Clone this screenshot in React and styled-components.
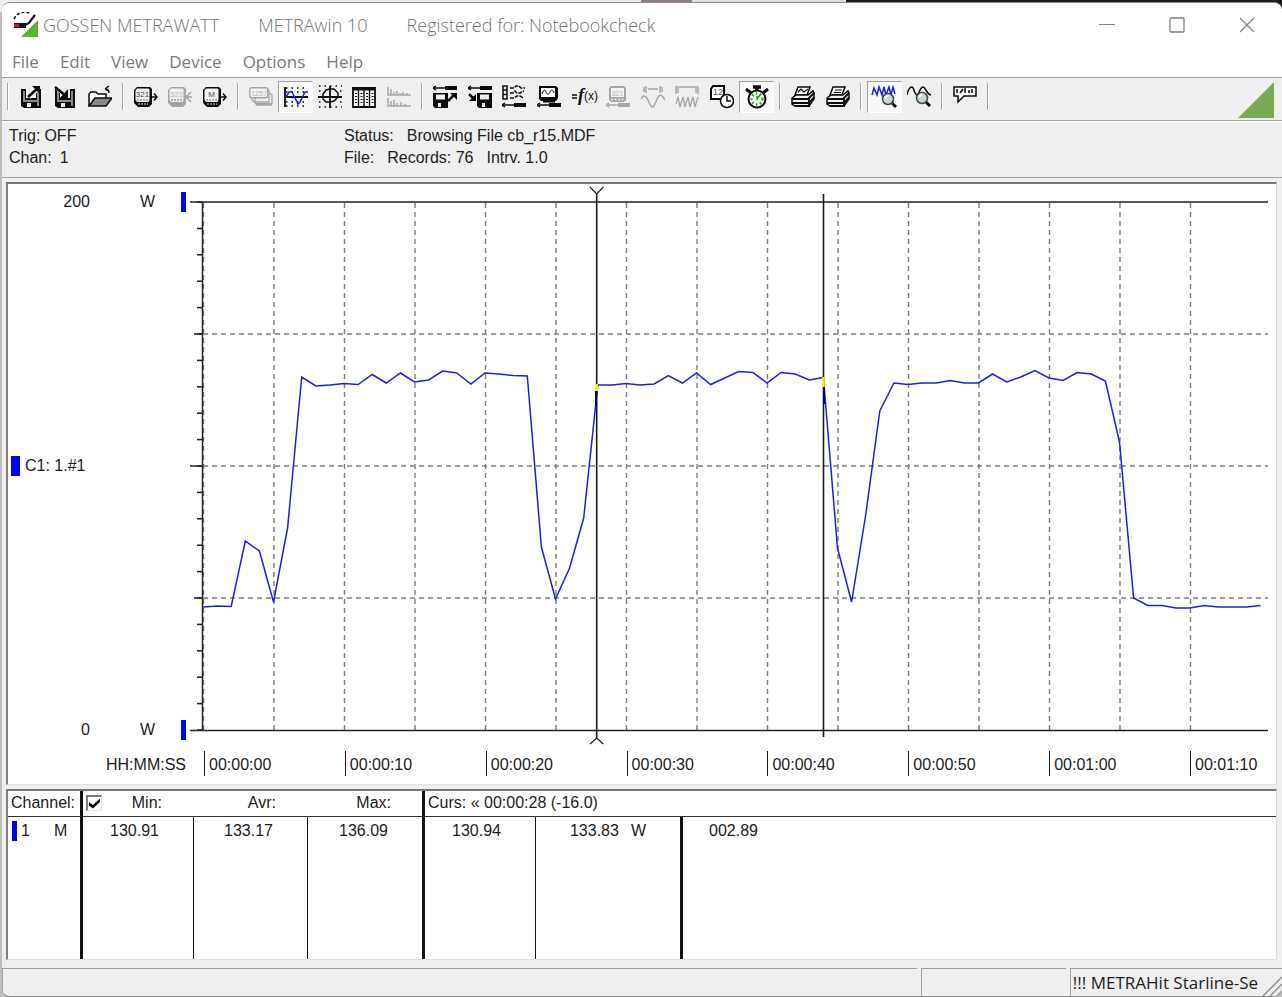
import React from "react";
import styled, { createGlobalStyle, css } from "styled-components";

const GlobalStyle = createGlobalStyle`
  * { box-sizing: border-box; }
  body {
    margin: 0;
    background: #c6c6c6;
    font-family: "Liberation Sans", Arial, sans-serif;
    font-size: 16px;
    line-height: 20px;
    color: #1c1c1c;
  }
`;

const Desktop = styled.div`
  min-height: 100vh;
  display: flex;
  flex-direction: column;
  padding: 2px 0 0 2px;
  background:
    linear-gradient(90deg, #ececec 0 50%, #8f7f78 50% 54%, #dcdcdc 54% 66%, #1d1a1a 66%) top / 100% 12px no-repeat,
    #bdbdbd;
`;

const Window = styled.main`
  flex: 1;
  display: flex;
  flex-direction: column;
  overflow: hidden;
  background: #efefef;
  border-top: 1px solid #8c8c8c;
  border-bottom: 1px solid #8c8c8c;
  border-radius: 8px;
`;

/* ---------- title bar and menu ---------- */

const TitleBar = styled.header`
  display: flex;
  align-items: center;
  height: 44px;
  padding-left: 11px;
  background: #fff;
  color: #747474;
  font-family: "Open Sans", sans-serif;
  font-size: 18px;
  font-weight: 300;
`;

const TitleText = styled.h1`
  display: flex;
  flex: 1;
  gap: 39px;
  margin: 0 0 0 4px;
  font: inherit;
  line-height: 24px;
  white-space: nowrap;
`;

const WindowButton = styled.button`
  display: grid;
  place-items: center;
  width: 70px;
  height: 44px;
  padding: 0;
  border: 0;
  background: none;
  color: #808080;
`;

const MenuBar = styled.nav`
  display: flex;
  align-items: center;
  gap: 21px;
  height: 31px;
  padding-left: 10px;
  background: #fff;
  border-bottom: 1px solid #a2a2a2;
`;

const MenuButton = styled.button`
  padding: 0;
  border: 0;
  background: none;
  color: #7a7a7a;
  font-family: "Open Sans", sans-serif;
  font-size: 17px;
  line-height: 24px;
`;

/* ---------- toolbar ---------- */

const Toolbar = styled.div`
  display: flex;
  align-items: flex-start;
  height: 43px;
  padding: 3px 8px 0 0;
  border-bottom: 1px solid #a2a2a2;
`;

const ToolGroup = styled.div`
  display: flex;
  flex: none;
  width: ${(p) => p.$width}px;
`;

const ToolButton = styled.button`
  display: grid;
  place-items: center;
  flex: 1;
  min-width: 0;
  height: 32px;
  padding: 0;
  border: 1px solid transparent;
  background: none;
  color: ${(p) => (p.disabled ? "#a6a6a6" : "#0b0b0b")};
  ${(p) =>
    p.$pressed &&
    css`
      background: #f8f8f8;
      border-color: #a0a0a0 #fff #fff #a0a0a0;
    `}
`;

const Separator = styled.span`
  flex: none;
  width: 2px;
  height: 27px;
  margin: 2px 5px 0;
  border-left: 1px solid #a4a4a4;
  border-right: 1px solid #fff;
`;

const BrandCorner = styled.svg`
  display: block;
  flex: none;
  margin-left: auto;
`;

/* ---------- recording information ---------- */

const InfoBar = styled.section`
  display: grid;
  grid-template-columns: 335px 1fr;
  padding: 3px 7px 8px;
  line-height: 22px;
  border-top: 1px solid #fff;
  border-bottom: 1px solid #a2a2a2;
`;

const InfoLine = styled.div`
  display: flex;
  gap: ${(p) => p.$gap}px;
  white-space: nowrap;
`;

/* ---------- sunken panels ---------- */

const Panel = styled.section`
  margin: ${(p) => p.$margin};
  background: #fff;
  border: solid;
  border-width: 2px 1px 1px 2px;
  border-color: #777 #e0e0e0 #e0e0e0 #808080;
`;

const ChartGrid = styled.div`
  display: grid;
  grid-template-columns: 182px 1fr;
  padding-right: 8px;
`;

const ScaleColumn = styled.div`
  display: flex;
  flex-direction: column;
  justify-content: space-between;
  padding: 8px 0;
`;

const ScaleRow = styled.div`
  display: grid;
  grid-template-columns: 82px 50px 33px 5px;
  align-items: center;
  height: 20px;
`;

const ScaleValue = styled.span`
  text-align: right;
`;

const ScaleUnit = styled.span`
  grid-column: 3;
`;

const ScaleBar = styled.span`
  width: 5px;
  height: 20px;
  margin-left: 8px;
  background: #0000f5;
`;

const ChannelTag = styled.div`
  display: flex;
  align-items: center;
  gap: 5px;
  padding-left: 3px;
`;

const ChannelSwatch = styled.span`
  width: ${(p) => p.$width}px;
  height: 20px;
  background: #0000f5;
`;

const Plot = styled.svg`
  display: block;
  width: 100%;
  height: 564px;
`;

const TimeUnit = styled.div`
  padding: 7px 4px 0 0;
  text-align: right;
`;

const TimeAxis = styled.div`
  display: grid;
  grid-template-columns: repeat(7, 141fr) 78fr;
  height: 36px;
  padding: 3px 0 0 14px;
`;

const TimeMark = styled.span`
  height: 25px;
  padding: 4px 0 0 4px;
  border-left: 1px solid #1c1c1c;
  white-space: nowrap;
`;

/* ---------- readings ---------- */

const Readings = styled.table`
  width: 100%;
  table-layout: fixed;
  border-collapse: separate;
  border-spacing: 0;
`;

const Head = styled.th`
  height: 26px;
  padding: 0 ${(p) => p.$pad ?? 32}px 1px 3px;
  border: 0 solid #111;
  border-bottom-color: #333;
  border-width: 0 ${(p) => p.$rule ?? 0}px 1px 0;
  font-weight: 400;
  text-align: ${(p) => p.$align ?? "right"};
  white-space: nowrap;
`;

const HeadWithCheck = styled.span`
  display: flex;
  align-items: center;
  justify-content: space-between;
`;

const Check = styled.input`
  appearance: none;
  display: grid;
  place-items: center;
  width: 16px;
  height: 16px;
  margin: 0;
  border: solid;
  border-width: 2px 1px 1px 2px;
  border-color: #7c7c7c #e4e4e4 #e4e4e4 #7c7c7c;
  background: #fff;
  &:checked::before {
    content: "";
    width: 11px;
    height: 10px;
    background: #000;
    clip-path: polygon(0 35%, 35% 65%, 100% 0, 100% 35%, 35% 100%, 0 70%);
  }
`;

const Cell = styled.td`
  height: 142px;
  padding: 4px 34px 0 4px;
  border: 0 solid #111;
  border-right-width: ${(p) => p.$rule ?? 0}px;
  text-align: ${(p) => p.$align ?? "right"};
  vertical-align: top;
  white-space: nowrap;
`;

const ChannelCell = styled(Cell)`
  padding-right: 0;
`;

const ChannelName = styled.span`
  display: grid;
  grid-template-columns: 9px 33px auto;
`;

const DeltaValue = styled.span`
  padding-left: 22px;
`;

const UnitAfter = styled.span`
  padding-left: 12px;
`;

/* ---------- status bar ---------- */

const StatusBar = styled.footer`
  display: grid;
  grid-template-columns: 914fr 145fr 212fr;
  gap: 4px;
  min-height: 28px;
  margin-top: auto;
`;

const StatusField = styled.div`
  display: flex;
  align-items: center;
  justify-content: space-between;
  min-width: 0;
  padding-left: 2px;
  border: 0 solid #a2a2a2;
  border-width: 1px 0 0 1px;
  font-family: "Open Sans", sans-serif;
  font-size: 17px;
  line-height: 24px;
  white-space: nowrap;
`;

const Grip = styled.svg`
  flex: none;
  align-self: flex-end;
`;

/* ---------- icons ---------- */

const Icon = ({ children }) => (
  <svg width="24" height="24" viewBox="0 0 24 24" fill="none" stroke="currentColor" strokeWidth="1.5" aria-hidden="true">
    {children}
  </svg>
);

const IconText = ({ x, y, size, children }) => (
  <text
    x={x}
    y={y}
    fontSize={size}
    textAnchor="middle"
    fill="currentColor"
    stroke="none"
    opacity="0.75"
    fontFamily="Liberation Sans, sans-serif"
  >
    {children}
  </text>
);

const Floppy = () => (
  <>
    <path d="M2 4h20v19H5l-3-2z" fill="currentColor" stroke="none" />
    <path d="M4 6h2v9H4zM18 6h2v15h-2zM4 15h16v2H4z" fill="#8b8b8b" stroke="none" />
    <path d="M7 2h10v11H7z" fill="#efefef" stroke="none" />
    <path d="M8 18h4v4H8z" fill="#efefef" stroke="none" />
  </>
);

const SmallFloppy = ({ x }) => (
  <g transform={`translate(${x} 0)`} stroke="none">
    <path d="M0 8h15v15H2l-2-2z" fill="currentColor" />
    <path d="M3 9.500h9v5H3zM5 18h3v4H5z" fill="#efefef" />
  </g>
);

const Probe = ({ y }) => (
  <g transform={`translate(0 ${y})`}>
    <path d="M0 0h13" />
    <path d="M3-2L0 0l3 2" />
    <path d="M12-2h12v4H12z" fill="currentColor" stroke="none" />
  </g>
);

const Meter = ({ label }) => (
  <>
    <path d="M3 2h13l2 2v15l-3 3H4l-4-4V5z" fill="currentColor" stroke="none" />
    <path d="M3 3.500h11.500l1 1V15l-1 2H3l-1.500-2V5.500z" fill="#f0f0f0" stroke="none" />
    <IconText x={8.5} y={12} size={8}>
      {label}
    </IconText>
    <path d="M3 15h11M4 19h10" stroke="#9a9a9a" strokeDasharray="2 1" />
  </>
);

const ArrowRight = () => <path d="M18 12h5M20 8.500l3 3.500-3 3.500" />;

const Printer = ({ children }) => (
  <>
    <path d="M4 10L7 2h12l-3 8z" fill="#fff" />
    {children}
    <path d="M1 13l4-3h12l5-4 1 2v6l-5 7H4l-3-2z" fill="#f2f2f2" />
    <path d="M1 14h16l6-6M1 18h17l5-6M4 21h14v-8" strokeWidth="1.800" />
  </>
);

const Lens = ({ cx, cy }) => (
  <>
    <path d={`M${cx + 3} ${cy + 3}l5 5`} strokeWidth="3" stroke="#0b0b0b" />
    <circle cx={cx} cy={cy} r="5.500" fill="#c9d6d6" stroke="#444" />
    <path d={`M${cx - 3} ${cy - 1}l3-3`} stroke="#fff" strokeWidth="2" />
  </>
);

const icons = {
  export: (
    <Icon>
      <Floppy />
      <path d="M10 12l9-9" stroke="#efefef" strokeWidth="5" />
      <path d="M9 12l10-9" strokeWidth="2.500" />
      <path d="M13 1h8v8z" fill="currentColor" stroke="none" />
    </Icon>
  ),
  import: (
    <Icon>
      <Floppy />
      <path d="M3 1l10 10" stroke="#efefef" strokeWidth="5" />
      <path d="M2 2l11 9" strokeWidth="2.500" />
      <path d="M15 4v9H7z" fill="currentColor" stroke="none" />
    </Icon>
  ),
  open: (
    <Icon>
      <path d="M1 21V9l2-2h5l2 2h8v4" fill="#fff" />
      <path d="M1 21l6-8h17l-6 8z" fill="#888" />
      <path d="M17 4c3 0 4 2 4 4M17 4l4-3M17 4l4 2" />
    </Icon>
  ),
  meterOut: (
    <Icon>
      <Meter label="321" />
      <ArrowRight />
    </Icon>
  ),
  meterMulti: (
    <Icon>
      <Meter label="321" />
      <path d="M17 12h3M18 12l5-5M18 12h6M18 12l5 5" />
    </Icon>
  ),
  memoryOut: (
    <Icon>
      <Meter label="M" />
      <ArrowRight />
    </Icon>
  ),
  display: (
    <Icon>
      <path d="M6 12v6l2 2h14l1-2v-8l-2-2M3 12v3l2 2h15V6l-1-2" strokeWidth="1.300" />
      <rect x="0.700" y="2.700" width="18" height="10" rx="2" fill="#f2f2f2" />
      <IconText x={10} y={10.5} size={7}>
        1257
      </IconText>
      <path d="M7 19h15" strokeWidth="2" />
    </Icon>
  ),
  curve: (
    <Icon>
      <path d="M2 3h22M2 7h22M2 17h22M2 21h22" strokeDasharray="1.500 4" />
      <path d="M1 2v20M0 12h24" strokeWidth="1.800" />
      <path d="M2 12l3-5h3l5 10 1 2 2-2 5-10h3" stroke="#2020e8" />
    </Icon>
  ),
  xy: (
    <Icon>
      <path d="M1 1h23M1 22h23M1 6h3M22 6h3M1 17h3M22 17h3" strokeDasharray="1.500 4" />
      <path d="M0 12h24M12 1v22" strokeWidth="1.800" />
      <path d="M12 4h4l4 4v4l-4 4-4 1H8l-3-3V9l3-4z" />
    </Icon>
  ),
  table: (
    <Icon>
      <path d="M1 3h22v19H1z" fill="#fff" strokeWidth="1.800" />
      <path d="M1 4h22" strokeWidth="3" />
      <path d="M6.500 3v19M12 3v19M17.500 3v19" strokeWidth="1.400" />
      <path d="M3 8.500h21M3 11.500h21M3 14.500h21M3 17.500h21" strokeDasharray="2 3.500" strokeWidth="1.200" />
    </Icon>
  ),
  bars: (
    <Icon>
      <path d="M1 2v8h23M1 13v8h23" />
      <path d="M4 4v6M7 7v3M10 6v4M13 8v2M16 7v3M20 8v2M4 16v5M7 15v6M10 18v3M14 17v4M18 19v2" />
    </Icon>
  ),
  probeSave: (
    <Icon>
      <Probe y={3} />
      <SmallFloppy x={0} />
      <path d="M15 16l6-6" strokeWidth="2.500" />
      <path d="M17 8h7v7z" fill="currentColor" stroke="none" />
    </Icon>
  ),
  probeLoad: (
    <Icon>
      <Probe y={3} />
      <SmallFloppy x={9} />
      <path d="M1 9l4 4" strokeWidth="2.500" />
      <path d="M8 9v7H1z" fill="currentColor" stroke="none" />
    </Icon>
  ),
  probeList: (
    <Icon>
      <path d="M1 1h4v13H1zM1 5h4M1 9.500h4" />
      <path d="M8 3h4l2-2h3l2 2h4M8 8h3l2-2 2 2h3l4-2M8 13h4l3-2h3l3 2" strokeDasharray="4 1" />
      <Probe y={20} />
    </Icon>
  ),
  probeScreen: (
    <Icon>
      <path d="M2 1h17l2 2v10l-2 3H4l-2-2z" fill="currentColor" stroke="none" />
      <path d="M4 3h14v9H4z" fill="#fff" stroke="none" />
      <path d="M5 9c2-5 3-5 4-2s3 3 4 0 3-2 4 1" strokeWidth="1" />
      <path d="M6 16h12" strokeWidth="3" />
      <Probe y={20} />
    </Icon>
  ),
  formula: (
    <svg width="28" height="24" viewBox="0 0 28 24" aria-hidden="true">
      <path d="M2 10h5M2 13h5" stroke="currentColor" strokeWidth="1.500" />
      <text x="8" y="16" fontSize="18" fontStyle="italic" fontWeight="700" fontFamily="Liberation Serif, serif" fill="currentColor">
        f
      </text>
      <text x="14" y="15" fontSize="12" fontFamily="Liberation Sans, sans-serif" fill="currentColor">
        (x)
      </text>
    </svg>
  ),
  probeMeter: (
    <Icon>
      <path d="M5 1h13l2 2v12l-2 2H5l-2-2V3z" fill="currentColor" stroke="none" />
      <path d="M5 3h13v9H5z" fill="#f2f2f2" stroke="none" />
      <IconText x={11.5} y={10.5} size={7}>
        321
      </IconText>
      <path d="M5 14.500h13" stroke="#efefef" strokeDasharray="2 1.500" />
      <Probe y={20} />
    </Icon>
  ),
  span: (
    <Icon>
      <path d="M5 1v7M19 1v7M7 4h10M3 2v5M21 2v5" />
      <path d="M0 14c2-4 5-4 7 1s4 9 6 6l4-9c2-3 4-2 7 3" />
    </Icon>
  ),
  compress: (
    <Icon>
      <path d="M1 9V2h22v7M3 3v5M21 3v5" />
      <path d="M1 19l2-7 2 10 3-10 2 10 3-10 2 10 3-10 2 10 3-10" strokeWidth="1.300" />
    </Icon>
  ),
  meterClock: (
    <Icon>
      <path d="M3 1h11v9l-3 4H1V4z" fill="#fff" strokeWidth="2" />
      <IconText x={8} y={10} size={9}>
        12
      </IconText>
      <circle cx="17" cy="16" r="6.500" fill="#fff" />
      <path d="M17 11v5h4" />
    </Icon>
  ),
  stopwatch: (
    <Icon>
      <circle cx="12" cy="14" r="8.500" fill="#fff" strokeWidth="2" />
      <circle cx="12" cy="14" r="5.500" stroke="#18a018" strokeWidth="2.500" strokeDasharray="1.500 2.500" />
      <path d="M12 14l3-4M12 15v-4" stroke="#18a018" />
      <path d="M8 2h8M12 1v5" strokeWidth="3.500" />
      <path d="M1 4l5 4M23 4l-5 4" strokeWidth="3" />
    </Icon>
  ),
  printCurve: (
    <Icon>
      <Printer>
        <path d="M7 7l3-3 3 3 4-3" strokeWidth="1.200" />
      </Printer>
    </Icon>
  ),
  printText: (
    <Icon>
      <Printer>
        <path d="M9 5h7M8 7.500h7" strokeWidth="1.200" />
      </Printer>
    </Icon>
  ),
  zoomWave: (
    <svg width="26" height="24" viewBox="0 0 26 24" fill="none" stroke="currentColor" strokeWidth="1.500" aria-hidden="true">
      <path d="M1 10l2-7 3 7 2-8 3 8 2-8 2 8 3-8 2 8 2-8 2 7" stroke="#2020e8" />
      <Lens cx={17} cy={14} />
    </svg>
  ),
  zoomCurve: (
    <Icon>
      <path d="M0 10c1-5 3-8 5-8s2 7 5 8c2 0 3-8 6-8s3 7 8 8" />
      <Lens cx={15} cy={13} />
    </Icon>
  ),
  note: (
    <Icon>
      <path d="M1 2h22v9H11l-6 6V11H1z" fill="#fff" />
      <path d="M4 4v4M7 8l3-4M13 4h-1v4M16 5v3M19 4v4" />
    </Icon>
  ),
};

const toolGroups = [
  { width: 103, tools: [["export", "Save as"], ["import", "Save"], ["open", "Open"]] },
  { width: 103, tools: [["meterOut", "Read device"], ["meterMulti", "Read several", "off"], ["memoryOut", "Read memory"]] },
  {
    width: 172,
    tools: [["display", "Display", "off"], ["curve", "Y-t chart", "on"], ["xy", "X-Y chart"], ["table", "Table"], ["bars", "Histogram", "off"]],
  },
  {
    width: 346,
    tools: [
      ["probeSave", "Save setup"],
      ["probeLoad", "Load setup"],
      ["probeList", "Channel list"],
      ["probeScreen", "Screen setup"],
      ["formula", "Formula"],
      ["probeMeter", "Device setup", "off"],
      ["span", "Expand", "off"],
      ["compress", "Compress", "off"],
      ["meterClock", "Set clock"],
      ["stopwatch", "Timer", "on"],
    ],
  },
  { width: 69, tools: [["printCurve", "Print chart"], ["printText", "Print table"]] },
  { width: 69, tools: [["zoomWave", "Zoom out", "on"], ["zoomCurve", "Zoom in"]] },
  { width: 34, tools: [["note", "Comment"]] },
];

/* ---------- chart ---------- */

// One reading per second, as a height in the plot (202 = 200 W, 730 = 0 W).
const trace = [
  607, 606, 606.5, 541, 551, 602, 528, 377, 386, 385, 383.5, 384.5, 374.5, 383, 373, 382, 380, 371, 373, 384,
  373, 374, 375.5, 376, 547, 599, 568, 518, 385, 385, 383.5, 385, 384, 375.5, 383, 373, 384.5, 378, 371.5, 372.5,
  383, 372.5, 374, 380, 377.5, 548, 602, 515, 411, 383, 384.5, 383, 383, 380.5, 383, 383, 374, 382, 377, 370.5,
  378, 380.5, 372.5, 374, 381, 442, 598, 605.5, 605.5, 608, 608, 605.5, 607, 607, 607, 605.5,
];
const xAt = (second) => 203.5 + second * 14.1;
const fiveSeconds = Array.from({ length: 15 }, (_, i) => xAt(i * 5));
const minorTicks = Array.from({ length: 21 }, (_, i) => 202 + i * 26.4);

const Chart = () => (
  <Plot viewBox="190 184 1078 564" preserveAspectRatio="none" fill="none" role="img" aria-label="Power over time">
    <g stroke="#7d7d7d" strokeWidth="1.400" strokeDasharray="5 4">
      {fiveSeconds.map((x) => (
        <path key={x} d={`M${x} 203V730`} />
      ))}
      {[334, 466, 598].map((y) => (
        <path key={y} d={`M203 ${y}H1268`} />
      ))}
    </g>
    <g stroke="#222" strokeWidth="1.500">
      <path d="M190 202H1268M190 730.500H1268M202.500 202V730M190 466H202M194 334H202M194 598H202" />
      {minorTicks.map((y) => (
        <path key={y} d={`M197 ${y}H202`} />
      ))}
    </g>
    <path d={`M${trace.map((y, i) => `${(xAt(i) - 0.5).toFixed(1)} ${y}`).join("L")}`} stroke="#2020d8" strokeWidth="1.500" />
    <g stroke="#1a1a1a" strokeWidth="1.600">
      <path d="M596.700 193V738M823.500 194V737" />
      <path d="M590 187l6.700 7 6.700-7M590 744l6.700-6 6.700 6" strokeWidth="1.200" />
      <path d="M596 391V406M824 387V404" stroke="#00007a" strokeWidth="2" />
    </g>
    <path d="M596.700 384V391M823.500 377V387" stroke="#f6f600" strokeWidth="2.500" />
  </Plot>
);

const times = ["00:00:00", "00:00:10", "00:00:20", "00:00:30", "00:00:40", "00:00:50", "00:01:00", "00:01:10"];

const ScaleLimit = ({ value }) => (
  <ScaleRow>
    <ScaleValue>{value}</ScaleValue>
    <ScaleUnit>W</ScaleUnit>
    <ScaleBar />
  </ScaleRow>
);

export default function App() {
  return (
    <Desktop>
      <GlobalStyle />
      <Window>
        <TitleBar>
          <svg width="26" height="26" viewBox="0 0 26 26" aria-hidden="true">
            <path d="M8 25L25 8v17z" fill="#5cb130" />
            <path d="M1 7c4-8 12-8 17-5" fill="none" stroke="#111" strokeWidth="1.500" strokeDasharray="3 2" />
            <path d="M1 11h12v5H1z" fill="#111" />
            <path d="M1 12h5v3H1z" fill="#e01010" />
            <path d="M12 13l4-2 6-8" fill="none" stroke="#111" strokeWidth="2.200" />
          </svg>
          <TitleText>
            <span>GOSSEN METRAWATT</span>
            <span>METRAwin 10</span>
            <span>Registered for: Notebookcheck</span>
          </TitleText>
          <WindowButton aria-label="Minimize">
            <svg width="16" height="16" stroke="currentColor">
              <path d="M0 7.500h16" />
            </svg>
          </WindowButton>
          <WindowButton aria-label="Maximize">
            <svg width="16" height="16" stroke="currentColor" fill="none">
              <rect x="1" y="1" width="14" height="14" rx="1" strokeWidth="1.300" />
            </svg>
          </WindowButton>
          <WindowButton aria-label="Close">
            <svg width="16" height="16" stroke="currentColor">
              <path d="M1 1l14 14M15 1L1 15" strokeWidth="1.200" />
            </svg>
          </WindowButton>
        </TitleBar>

        <MenuBar>
          {["File", "Edit", "View", "Device", "Options", "Help"].map((name) => (
            <MenuButton key={name}>{name}</MenuButton>
          ))}
        </MenuBar>

        <Toolbar role="toolbar">
          <Separator />
          {toolGroups.map((group, i) => (
            <React.Fragment key={i}>
              <ToolGroup $width={group.width}>
                {group.tools.map(([name, label, state]) => (
                  <ToolButton key={name} aria-label={label} disabled={state === "off"} $pressed={state === "on"}>
                    {icons[name]}
                  </ToolButton>
                ))}
              </ToolGroup>
              <Separator />
            </React.Fragment>
          ))}
          <BrandCorner width="36" height="37" viewBox="0 0 36 37" aria-hidden="true">
            <path d="M0 37L36 1v36z" fill="#77ac55" />
          </BrandCorner>
        </Toolbar>

        <InfoBar>
          <InfoLine $gap={4}>
            <span>Trig:</span>
            <span>OFF</span>
          </InfoLine>
          <InfoLine $gap={13}>
            <span>Status:</span>
            <span>Browsing File cb_r15.MDF</span>
          </InfoLine>
          <InfoLine $gap={8}>
            <span>Chan:</span>
            <span>1</span>
          </InfoLine>
          <InfoLine $gap={13}>
            <span>File:</span>
            <span>Records: 76</span>
            <span>Intrv. 1.0</span>
          </InfoLine>
        </InfoBar>

        <Panel $margin="4px 5px 0 4px">
          <ChartGrid>
            <ScaleColumn>
              <ScaleLimit value="200" />
              <ChannelTag>
                <ChannelSwatch $width={9} />
                <span>C1: 1.#1</span>
              </ChannelTag>
              <ScaleLimit value="0" />
            </ScaleColumn>
            <Chart />
            <TimeUnit>HH:MM:SS</TimeUnit>
            <TimeAxis>
              {times.map((time) => (
                <TimeMark key={time}>{time}</TimeMark>
              ))}
            </TimeAxis>
          </ChartGrid>
        </Panel>

        <Panel $margin="4px 5px 7px 4px">
          <Readings>
            <colgroup>
              <col width="75" />
              <col width="111" />
              <col width="114" />
              <col width="117" />
              <col width="111" />
              <col width="147" />
              <col />
            </colgroup>
            <thead>
              <tr>
                <Head $align="left" $pad={0} $rule={3}>
                  Channel:
                </Head>
                <Head>
                  <HeadWithCheck>
                    <Check type="checkbox" defaultChecked aria-label="Show statistics" />
                    <span>Min:</span>
                  </HeadWithCheck>
                </Head>
                <Head>Avr:</Head>
                <Head $rule={3} $pad={31}>
                  Max:
                </Head>
                <Head colSpan={3} $align="left">
                  Curs: « 00:00:28 (-16.0)
                </Head>
              </tr>
            </thead>
            <tbody>
              <tr>
                <ChannelCell $align="left" $rule={3}>
                  <ChannelName>
                    <ChannelSwatch $width={5} />
                    <span>1</span>
                    <span>M</span>
                  </ChannelName>
                </ChannelCell>
                <Cell $rule={1}>130.91</Cell>
                <Cell $rule={1}>133.17</Cell>
                <Cell $rule={3}>136.09</Cell>
                <Cell $rule={1}>130.94</Cell>
                <Cell $rule={3}>
                  133.83<UnitAfter>W</UnitAfter>
                </Cell>
                <Cell $align="left">
                  <DeltaValue>002.89</DeltaValue>
                </Cell>
              </tr>
            </tbody>
          </Readings>
        </Panel>

        <StatusBar>
          <StatusField />
          <StatusField />
          <StatusField>
            <span>!!! METRAHit Starline-Se</span>
            <Grip width="20" height="20" stroke="#8d8d8d" strokeWidth="1.500" aria-hidden="true">
              <path d="M1 20L20 1M8 20L20 8M15 20l5-5" />
            </Grip>
          </StatusField>
        </StatusBar>
      </Window>
    </Desktop>
  );
}
